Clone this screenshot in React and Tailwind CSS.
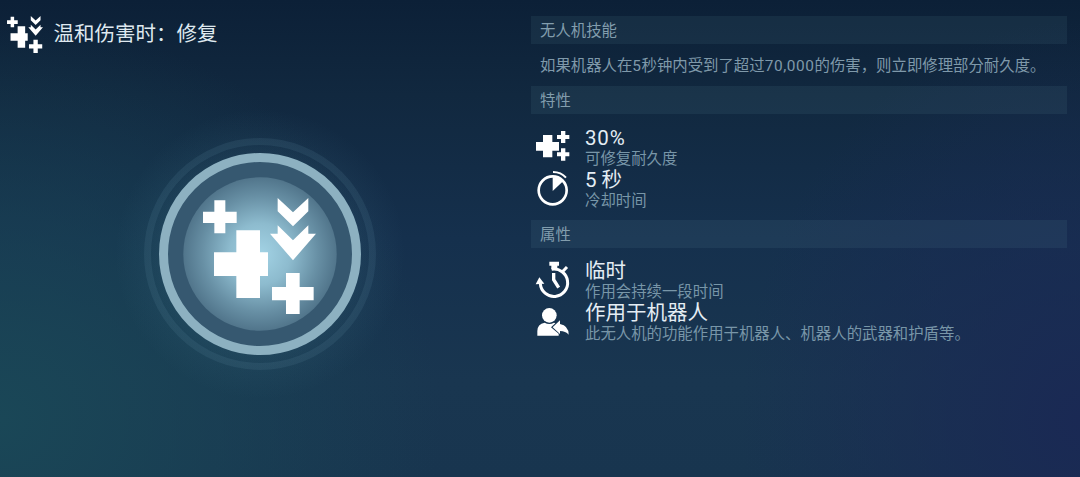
import React from "react";

const RepairBurstIcon = ({ className }) => (
  <svg viewBox="219 218 339 349" className={className} fill="currentColor">
    <path d="M253 225h33v34h34v34h-34v31h-33v-31h-34v-34h34z" />
    <path d="M319 315h71v66h24v71h-24v66h-71v-66h-67v-71h67z" />
    <path d="M468 443h41v42h42v40h-42v42h-41v-42h-42v-40h42z" />
    <path d="M443 218l46 43 46-43v40l-46 45-46-45z" />
    <path d="M443 300l46 45 46-45v25h23l-69 80-69-80h23z" />
  </svg>
);

const RepairIcon = () => (
  <svg viewBox="24 21 120 126" className="h-[42px] w-10 shrink-0" fill="currentColor">
    <path d="M54 45h28v21h20v26h-20v20h-28v-20h-21v-26h21z" />
    <path d="M108 33h13v12h12v12h-12v12h-13v-12h-12v-12h12z" />
    <path d="M108 85h13v12h12v12h-12v13h-13v-13h-12v-12h12z" />
  </svg>
);

const CooldownIcon = () => (
  <svg viewBox="24 147 120 126" className="h-[42px] w-10 shrink-0" fill="none" stroke="currentColor">
    <circle cx="83" cy="211" r="42" strokeWidth="8" />
    <path d="M83 213v-41q18 0 32 11z" fill="currentColor" stroke="none" />
    <path d="M84 156q24 0 39 17" strokeWidth="6" />
  </svg>
);

const TemporaryIcon = () => (
  <svg viewBox="24 135 120 126" className="h-[42px] w-10 shrink-0" fill="none" stroke="currentColor">
    <path d="M73 140h29v12h-5v11h-18v-11h-6z" fill="currentColor" stroke="none" />
    <path d="M80 163A41 41 0 1 1 46 206" strokeWidth="9" />
    <path d="M111 172l15-16" strokeWidth="9" />
    <path d="M32 208l11-21 15 19z" fill="currentColor" stroke="none" />
    <path d="M86 174v20l15 24" strokeWidth="10" />
  </svg>
);

const RobotTargetIcon = () => (
  <svg viewBox="24 261 120 126" className="h-[42px] w-10 shrink-0" fill="currentColor">
    <circle cx="73" cy="301" r="22" />
    <path d="M37 362v-14q0-21 22-25q14 8 28 0l4 2-13 12 23 19v6z" />
    <path d="M83 337l22-21v11q26 5 26 32q-9-11-26-11v9z" />
  </svg>
);

const TRAITS = [
  { icon: RepairIcon, title: "30%", text: "可修复耐久度" },
  { icon: CooldownIcon, title: "5 秒", text: "冷却时间" },
];

const ATTRIBUTES = [
  { icon: TemporaryIcon, title: "临时", text: "作用会持续一段时间" },
  { icon: RobotTargetIcon, title: "作用于机器人", text: "此无人机的功能作用于机器人、机器人的武器和护盾等。" },
];

const SectionHeader = ({ children }) => (
  <h2 className="h-7 bg-[#7fb4c0]/9 pl-[9px] text-[15.4px] leading-[30px] text-[#829dad]">
    {children}
  </h2>
);

const StatRow = ({ icon: Icon, title, text }) => (
  <div className="flex h-[42px] pl-0.5">
    <Icon />
    <div className="ml-3 whitespace-nowrap">
      <div className={`h-[21px] text-[20.5px] leading-[22px] text-[#e4edf4] ${title.endsWith("%") ? "tracking-[0.8px]" : ""}`}>
        {title}
      </div>
      <div className="h-[21px] text-[15.4px] leading-[22px] text-[#7896a8]">{text}</div>
    </div>
  </div>
);

const Emblem = () => (
  <div className="relative h-[300px] w-[300px]">
    <svg viewBox="-150 -150 300 300" className="h-full w-full">
      <defs>
        <radialGradient id="halo">
          <stop offset="0.6" stopColor="#5f9db2" stopOpacity="0.14" />
          <stop offset="0.78" stopColor="#5f9db2" stopOpacity="0.06" />
          <stop offset="1" stopColor="#5f9db2" stopOpacity="0" />
        </radialGradient>
        <radialGradient id="core">
          <stop offset="0" stopColor="#a3d3e5" />
          <stop offset="0.4" stopColor="#8dbbce" />
          <stop offset="0.75" stopColor="#6890a5" />
          <stop offset="1" stopColor="#51758b" />
        </radialGradient>
      </defs>
      <circle r="145" fill="url(#halo)" />
      <circle r="112.5" fill="none" stroke="#6d9db0" strokeOpacity="0.13" strokeWidth="7" />
      <circle r="96.5" fill="#365870" stroke="#8db1c1" strokeWidth="9" />
      <circle r="76.7" fill="url(#core)" />
    </svg>
    <RepairBurstIcon className="absolute top-[93.5px] left-[93px] h-[116.3px] w-[113px]" />
  </div>
);

const App = () => (
  <div className="flex h-[477px] w-[1080px] overflow-hidden bg-[radial-gradient(ellipse_440px_400px_at_0%_88%,#1a4757_0%,#1a475700_100%),radial-gradient(ellipse_340px_400px_at_100%_88%,#1a2954_0%,#1a295400_100%),linear-gradient(180deg,#0c2037_0%,#11283f_20%,#15304d_50%,#193650_80%,#18354f_100%)] font-[Roboto,'Noto_Sans_CJK_SC',sans-serif] text-white">
    <div className="w-[531px] shrink-0">
      <div className="flex items-start pt-[15.5px] pl-[6.5px]">
        <RepairBurstIcon className="h-[37px] w-9" />
        <h1 className="ml-[11px] pt-0.5 text-[20.5px] leading-8 text-[#dfe9f0]">温和伤害时：修复</h1>
      </div>
      <div className="mt-[51.5px] pl-[110px]">
        <Emblem />
      </div>
    </div>
    <div className="w-[536px] pt-4">
      <SectionHeader>无人机技能</SectionHeader>
      <p className="h-[42px] pl-[9px] text-[15.4px] leading-[44px] whitespace-nowrap text-[#7f99aa]">
        如果机器人在<span className="tracking-[0.5px]">5</span>秒钟内受到了超过
        <span className="tracking-[0.6px]">70,000</span>的伤害，则立即修理部分耐久度。
      </p>
      <SectionHeader>特性</SectionHeader>
      <div className="pt-[13px] pb-[9px]">
        {TRAITS.map((item) => (
          <StatRow key={item.title} {...item} />
        ))}
      </div>
      <SectionHeader>属性</SectionHeader>
      <div className="pt-3">
        {ATTRIBUTES.map((item) => (
          <StatRow key={item.title} {...item} />
        ))}
      </div>
    </div>
  </div>
);

export default App;
